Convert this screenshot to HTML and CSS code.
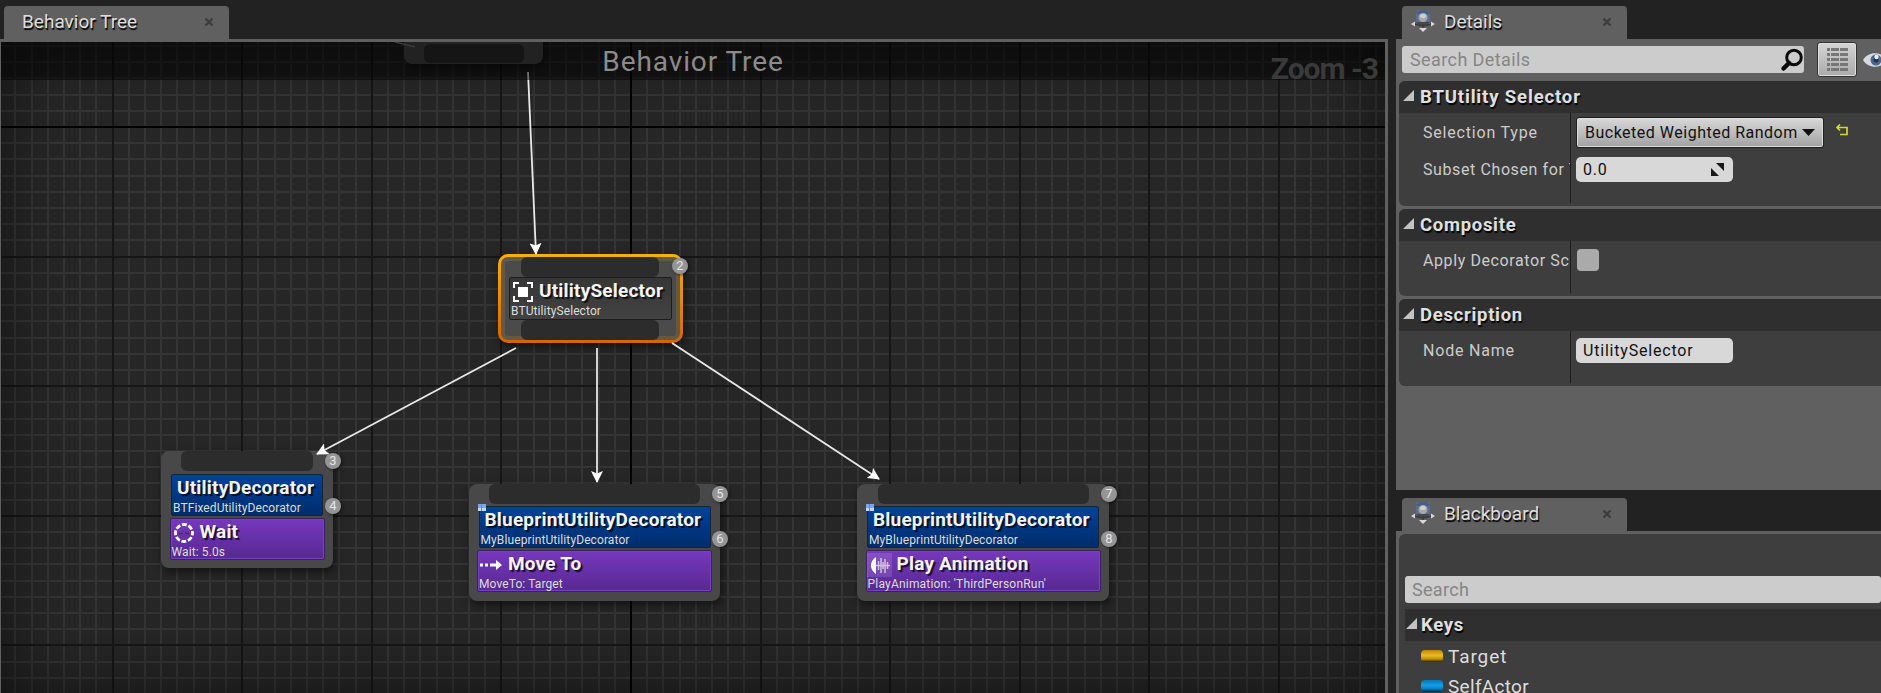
FILE: index.html
```html
<!DOCTYPE html>
<html lang="en">
<head>
<meta charset="utf-8">
<title>Behavior Tree</title>
<link rel="stylesheet" href="styles.css">
</head>
<body>
<svg width="0" height="0" class="defs">
  <defs>
    <symbol id="close" viewBox="0 0 10 10"><path d="M1.5 1.5 8.5 8.5M8.5 1.5 1.5 8.5" stroke="#3c3c3c" stroke-width="2.2"/></symbol>
    <symbol id="tabicon" viewBox="0 0 24 24">
      <rect x="5" y="1" width="14" height="14" rx="3" fill="#5d6f8b"/>
      <path d="M5 4l4-3h7l3 3-3 2H8z" fill="#465f88"/>
      <circle cx="12" cy="8.500" r="4.500" fill="#a5a9ae"/>
      <ellipse cx="12" cy="7" rx="3" ry="2" fill="#d0d0d0"/>
      <path d="M5 13h14l-4 4H9z" fill="#45494f"/>
      <path d="M3 15l9 2 9-2M12 15v5" stroke="#3a3a3a" stroke-width="1.500" fill="none"/>
      <path d="M0 15l4-2.500v5zM24 15l-4-2.500v5zM8 19h8l-4 4z" fill="#d8d8d8"/>
    </symbol>
    <symbol id="tri" viewBox="0 0 11 11"><path d="M11 0v11H0z" fill="#c3c3c3"/></symbol>
  </defs>
</svg>
<div class="app">
  <main class="left">
    <div class="tabs"><div class="tab"><span>Behavior Tree</span><svg class="x"><use href="#close"/></svg></div></div>
    <div class="graph">
      <div class="grid"></div>
      <div class="shade"></div>
      <div class="node stub"><div class="slot"></div></div>

      <div class="node sel">
        <div class="slot"></div>
        <div class="box gray">
          <div class="head"><svg class="ic" viewBox="0 0 20 20"><path d="M1 6V1h5M14 1h5v5M19 14v5h-5M6 19H1v-5" fill="none" stroke="#fff" stroke-width="2"/><path d="M5 5h10v10H5z" fill="#fff"/></svg><b>UtilitySelector</b></div>
          <p>BTUtilitySelector</p>
        </div>
        <div class="slot low"></div>
        <i class="badge b1">2</i>
      </div>

      <div class="node n1">
        <div class="slot"></div>
        <div class="box blue"><div class="head"><b class="flush">UtilityDecorator</b></div><p>BTFixedUtilityDecorator</p></div>
        <div class="box purple"><div class="head"><svg class="ic" viewBox="0 0 20 20"><circle cx="10" cy="10" r="8.500" fill="none" stroke="#fff" stroke-width="2.800" stroke-dasharray="4.900 1.780" stroke-dashoffset="2.400"/><path d="M5 11l4-1M11 10l4 1" stroke="#48257a" stroke-width="1.500"/></svg><b>Wait</b></div><p>Wait: 5.0s</p></div>
        <i class="badge b1">3</i><i class="badge b2">4</i>
      </div>

      <div class="node n2">
        <div class="slot"></div>
        <div class="box blue"><span class="bp"></span><div class="head"><b class="flush">BlueprintUtilityDecorator</b></div><p>MyBlueprintUtilityDecorator</p></div>
        <div class="box purple"><div class="head"><svg class="ic mv" viewBox="0 0 22 20"><path d="M0 8.500h3v3H0zM5 8.500h3v3H5zM10 8.500h6V5l6 5-6 5v-3.500h-6z" fill="#fff"/></svg><b>Move To</b></div><p>MoveTo: Target</p></div>
        <i class="badge b1">5</i><i class="badge b2">6</i>
      </div>

      <div class="node n3">
        <div class="slot"></div>
        <div class="box blue"><span class="bp"></span><div class="head"><b class="flush">BlueprintUtilityDecorator</b></div><p>MyBlueprintUtilityDecorator</p></div>
        <div class="box purple"><div class="head"><svg class="ic wave" viewBox="0 0 25 24"><path d="M0 0h25v24H0z" fill="#fff" opacity=".13"/><path d="M9 4v17C5 18 4 15 4 12.500S5 7 9 4z" fill="#fff"/><path d="M9 12.500h14M11.500 8v9M14 5v15M16 9v7M18 6v14M20.500 9v7" stroke="#fff" stroke-width="1.500" opacity=".65"/></svg><b>Play Animation</b></div><p class="anim">PlayAnimation: 'ThirdPersonRun'</p></div>
        <i class="badge b1">7</i><i class="badge b2">8</i>
      </div>

      <svg class="wires" width="1385" height="651" viewBox="0 42 1385 651">
        <defs>
          <marker id="arrow" viewBox="0 0 12 12" refX="11" refY="6" markerWidth="12" markerHeight="12" markerUnits="userSpaceOnUse" orient="auto"><path d="M0 0 12 6 0 12 2.500 6z" fill="#fff"/></marker>
        </defs>
        <g stroke="#e8e8e8" stroke-width="1.800" fill="none">
          <path d="M395 42l20 5" stroke="#777"/>
          <path d="M528 72 536 254" marker-end="url(#arrow)"/>
          <path d="M516 348 317 454" marker-end="url(#arrow)"/>
          <path d="M597 348V482" marker-end="url(#arrow)"/>
          <path d="M672 343 879 479" marker-end="url(#arrow)"/>
        </g>
      </svg>
      <div class="banner">Behavior Tree</div>
      <div class="zoom">Zoom -3</div>
    </div>
  </main>

  <aside class="right">
    <div class="tabs"><div class="tab wide"><svg class="ti"><use href="#tabicon"/></svg><span>Details</span><svg class="x"><use href="#close"/></svg></div></div>
    <section class="details">
      <div class="toolbar">
        <div class="search"><span>Search Details</span><svg width="24" height="27" viewBox="0 0 24 27"><circle cx="14" cy="11.500" r="7.300" fill="none" stroke="#0a0a0a" stroke-width="3"/><path d="M9 17 3.500 22.500" stroke="#0a0a0a" stroke-width="4.500" stroke-linecap="round"/></svg></div>
        <div class="gridbtn"><svg width="21" height="23" viewBox="0 0 21 23" fill="#777"><path d="M0 0h3v3H0zM4 0h8v3H4zM13 0h8v3h-8zM0 5h3v3H0zM4 5h8v3H4zM13 5h8v3h-8zM0 10h3v3H0zM4 10h8v3H4zM13 10h8v3h-8zM0 15h3v3H0zM4 15h8v3H4zM13 15h8v3h-8zM0 20h3v3H0zM4 20h8v3H4zM13 20h8v3h-8z"/></svg></div>
        <svg class="eye" width="24" height="18" viewBox="0 0 24 18"><path d="M0 9C5 0 19 0 24 9 19 18 5 18 0 9z" fill="#d5d9de"/><circle cx="13" cy="9" r="5.500" fill="#4b6790"/><circle cx="13" cy="9" r="2.500" fill="#22324d"/><circle cx="13.500" cy="6" r="2.200" fill="#eef"/></svg>
      </div>
      <div class="cat c1">
        <h3><svg><use href="#tri"/></svg><span class="long">BTUtility Selector</span></h3>
        <div class="rows">
          <div class="row"><label>Selection Type</label><div class="val"><div class="drop"><span>Bucketed Weighted Random</span><svg width="13" height="7" viewBox="0 0 13 7"><path d="M0 0h13L6.500 7z" fill="#111"/></svg></div><svg class="reset" width="13" height="13" viewBox="0 0 13 13"><path d="M1 3.500h10v7H4M4 .5 1 3.500l3 3" fill="none" stroke="#d3d82f" stroke-width="1.700"/></svg></div></div>
          <div class="row"><label class="tight">Subset Chosen for This</label><div class="val"><div class="field"><span>0.0</span><svg width="13" height="13" viewBox="0 0 13 13"><path d="M5 0h8v8zM0 5v8h8z" fill="#181818"/></svg></div></div></div>
        </div>
      </div>
      <div class="cat c2">
        <h3><svg><use href="#tri"/></svg><span>Composite</span></h3>
        <div class="rows"><div class="row"><label class="tight">Apply Decorator Scope</label><div class="val"><div class="check"></div></div></div></div>
      </div>
      <div class="cat c3">
        <h3><svg><use href="#tri"/></svg><span>Description</span></h3>
        <div class="rows"><div class="row"><label>Node Name</label><div class="val"><div class="field">UtilitySelector</div></div></div></div>
      </div>
    </section>
    <div class="tabs second"><div class="tab wide"><svg class="ti"><use href="#tabicon"/></svg><span>Blackboard</span><svg class="x"><use href="#close"/></svg></div></div>
    <section class="board">
      <div class="inner">
        <div class="search2">Search</div>
        <h3><svg><use href="#tri"/></svg><span>Keys</span></h3>
        <div class="key"><i class="pill y"></i><span class="target">Target</span></div>
        <div class="key"><i class="pill c"></i><span>SelfActor</span></div>
      </div>
    </section>
  </aside>
</div>
</body>
</html>
```

FILE: styles.css
```css
* { box-sizing: border-box; }
body { margin: 0; width: 1881px; height: 693px; overflow: hidden; background: #222; font-family: Roboto, "Noto Sans", sans-serif; color: #ddd; }
p, h3 { margin: 0; }
.defs { position: absolute; }
.app { display: flex; height: 693px; }
.left { width: 1388px; display: flex; flex-direction: column; }
.tabs { height: 39px; padding: 6px 0 0 4px; flex: none; }
.tab { width: 225px; height: 33px; border-radius: 4px 4px 0 0; background: #606060; display: flex; align-items: center; padding: 0 15px 3px 18px; font-size: 19px; text-shadow: 1px 2px 1px #000; white-space: nowrap; }
.tab .x { width: 10px; height: 10px; margin-left: auto; margin-top: 2px; }

.graph { position: relative; flex: 1; border: solid #606060; border-width: 3px 3px 0 1px; overflow: hidden; background: #262626; }
.grid { position: absolute; inset: 0; background-image:
  linear-gradient(90deg, #000 2px, transparent 2px),
  linear-gradient(#000 2px, transparent 2px),
  repeating-linear-gradient(90deg, #161616 0 2px, transparent 2px 129.6px),
  repeating-linear-gradient(#161616 0 2px, transparent 2px 129.6px),
  repeating-linear-gradient(90deg, #343434 0 2px, transparent 2px 16.2px),
  repeating-linear-gradient(#343434 0 2px, transparent 2px 16.2px);
  background-size: 2px 100%, 100% 2px, 1600px 100%, 100% 900px, 1600px 100%, 100% 900px;
  background-position: 629px 0, 0 84px, -19px 0, 0 -45.600px, -19px 0, 0 -45.600px;
  background-repeat: no-repeat; }
.shade { position: absolute; inset: 0; box-shadow: inset 0 0 70px rgba(0,0,0,.55); }
.wires { position: absolute; left: -1px; top: 0; }
.banner { position: absolute; left: 0; right: 0; top: 0; height: 38px; line-height: 40px; background: rgba(0,0,0,.52); color: #8b8b8b; text-align: center; font-size: 28px; letter-spacing: .9px; }
.zoom { position: absolute; right: 7px; top: 8px; font-size: 30px; font-weight: bold; line-height: 38px; color: #3a3a3a; letter-spacing: -1px; }

.node { position: absolute; display: flex; flex-direction: column; align-items: center; border-radius: 8px; background: #484848; box-shadow: 2px 4px 8px rgba(0,0,0,.5); }
.slot { flex: none; background: #2c2c2c; border-radius: 6px; height: 20px; }
.stub { left: 403px; top: -20px; width: 139px; height: 42px; padding-top: 22px; }
.stub .slot { width: 100px; height: 19px; }
.sel { left: 497px; top: 212px; width: 185px; height: 89px; border-radius: 10px; background: linear-gradient(#4b4b4b, #4b4b4b) padding-box, linear-gradient(#f4b301, #d46500) border-box; border: 3px solid transparent; box-shadow: 2px 4px 8px rgba(0,0,0,.5), inset 0 0 0 4px rgba(200,140,40,.22); }
.sel .slot { width: 138px; margin-right: 2px; }
.box { position: relative; border: 1px solid #1d1d1d; border-radius: 2px; white-space: nowrap; color: #eee; flex: none; height: 42px; }
.gray { width: 163px; height: 43px; background: linear-gradient(#363636, #424242); }
.blue { background: linear-gradient(#00429a, #002d6c); border-color: #172338; margin-top: 2px; }
.purple { background: linear-gradient(#7638bd, #572891); border-color: #3d1f63; margin-top: 2px; box-shadow: inset 0 0 0 1px #7a3fc4; }
.head { height: 26px; display: flex; align-items: center; }
.head b { font-size: 19px; line-height: 24px; color: #f4f4f4; text-shadow: 2px 2px 1px #000b; letter-spacing: .2px; margin-top: -1px; }
.box p { font-size: 12px; line-height: 14px; padding-left: 1px; color: #ddd; letter-spacing: .1px; }
.box p.anim { letter-spacing: .2px; }
.ic { width: 20px; height: 20px; margin: 2px 6px 0 3px; flex: none; }
.badge { position: absolute; width: 16px; height: 16px; border-radius: 50%; background: #959595; color: #e5e5e5; font: 13px/16px Roboto, sans-serif; text-align: center; right: -8px; top: 1.500px; box-shadow: 1px 1px 3px #0008; }
.badge.b2 { top: 47px; }
.sel .badge { right: -8px; top: 1px; }
.n1 { left: 160px; top: 409px; width: 172px; height: 117px; }
.n1 .slot { width: 132px; }
.n1 .blue { width: 152px; margin-top: 3px; } .n1 .purple { width: 155px; }
.n2 { left: 468px; top: 442px; width: 251px; height: 117px; }
.n3 { left: 856px; top: 442px; width: 252px; height: 117px; }
.n2 .slot, .n3 .slot { width: 211px; }
.n2 .blue, .n3 .blue { width: 232px; }
.n2 .purple, .n3 .purple { width: 235px; }
.bp { position: absolute; left: -2px; top: -3px; width: 8px; height: 7px; background: linear-gradient(90deg, transparent 3px, #5b86e8 3px 4px, transparent 4px), linear-gradient(#7fa4f5 4px, #c5d6ff 4px); }
.head .flush { margin-left: 5px; }
.head .mv { width: 22px; margin-left: 2px; }
.head .wave { width: 25px; height: 24px; margin: 2px 5px 0 0; }

.right { width: 485px; margin-left: 8px; display: flex; flex-direction: column; flex: none; }
.right .tabs { padding-left: 6px; }
.tab.wide { padding-left: 9px; padding-right: 15px; }
.ti { width: 24px; height: 24px; margin-right: 9px; }
.details { height: 451px; background: #606060; padding-left: 3px; flex: none; }
.toolbar { height: 42px; display: flex; align-items: center; padding: 0 0 1px 3px; }
.search { width: 402px; height: 27px; background: #ccc; border-radius: 3px; display: flex; justify-content: space-between; align-items: center; padding-left: 8px; color: #858585; font-size: 18px; letter-spacing: .4px; flex: none; }
.gridbtn { width: 40px; height: 35px; margin-left: 13px; border: 1px solid #333; border-radius: 3px; background: linear-gradient(#d5d5d5, #aaa); box-shadow: inset 0 0 0 1px #ddd; display: flex; align-items: center; justify-content: center; flex: none; }
.eye { margin-left: 6px; flex: none; }
.cat { background: #3e3e3e; border-radius: 6px 0 0 6px; overflow: hidden; margin-bottom: 3px; display: flex; flex-direction: column; }
.c1 { height: 125px; } .c2 { height: 87px; } .c3 { height: 87px; }
h3 { height: 32px; background: #2f2f2f; display: flex; align-items: center; font-size: 18.500px; color: #e0e0e0; text-shadow: 1px 2px 1px #000; letter-spacing: .7px; flex: none; }
h3 .long { letter-spacing: .85px; }
h3 svg { width: 11px; height: 11px; margin: 0 6px 4px 4px; }
.rows { flex: 1; background: linear-gradient(#1c1c1c, #1c1c1c) 171px 0 / 1px calc(100% - 3px) no-repeat; }
.row { display: flex; align-items: center; height: 37px; padding-top: 1px; }
label { width: 171px; padding-left: 24px; font-size: 16px; letter-spacing: .8px; white-space: nowrap; overflow: hidden; color: #ccc; flex: none; }
label.tight { letter-spacing: .6px; }
.val { padding-left: 6px; display: flex; align-items: center; }
.drop { width: 248px; height: 31px; border: 1px solid #1f1f1f; box-shadow: inset 0 0 0 1px #ddd; border-radius: 3px; background: linear-gradient(#d8d8d8, #a2a2a2); color: #111; font-size: 16px; letter-spacing: .5px; display: flex; align-items: center; padding-left: 8px; gap: 4px; white-space: nowrap; }
.reset { margin: 0 0 3px 12px; }
.field { width: 157px; height: 25px; border-radius: 5px; background: #d8d8d8; color: #111; font-size: 16px; letter-spacing: .8px; display: flex; align-items: center; justify-content: space-between; padding: 0 9px 0 7px; }
.check { width: 22px; height: 22px; border-radius: 4px; background: #aaa; margin-left: 1px; }
.second { margin-top: 2px; }
.board { flex: 1; background: #606060; padding: 3px 0 0 3px; }
.inner { height: 160px; background: #3e3e3e; border-radius: 6px 0 0 0; padding: 42px 0 0 6px; overflow: hidden; }
.search2 { height: 27px; border-radius: 3px; background: #ccc; color: #858585; font-size: 18px; line-height: 27px; padding-left: 7px; letter-spacing: .3px; margin-bottom: 6px; }
.inner h3 svg { margin-left: 1px; margin-right: 4px; }
.key { display: flex; align-items: center; height: 30px; font-size: 19px; letter-spacing: .3px; padding-left: 16px; }
.target { letter-spacing: .9px; }
.pill { width: 22px; height: 12px; border-radius: 4px; margin-right: 5px; }
.y { background: linear-gradient(#b98705, #e7bd22 45%, #c09105 75%, #2a2103); }
.c { background: linear-gradient(#0873b5, #12a0e8 45%, #077cc0 75%, #042338); }
```
